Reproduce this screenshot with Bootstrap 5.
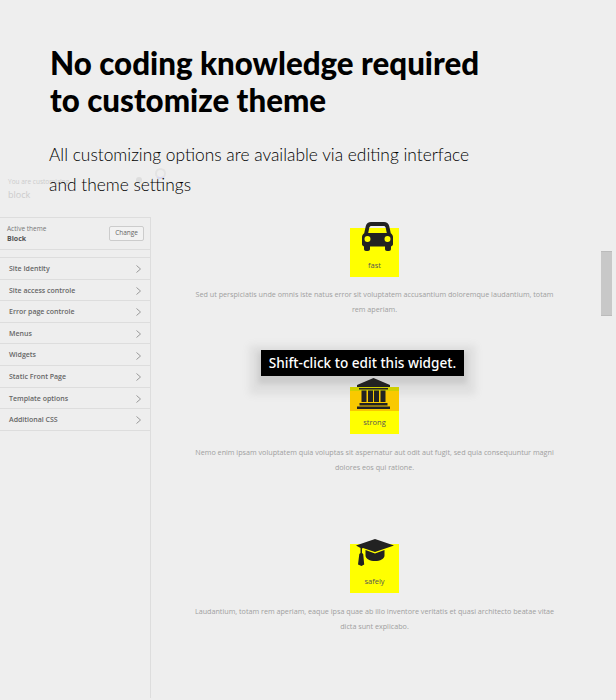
<!DOCTYPE html>
<html lang="en"><head><meta charset="utf-8"><title>Customize theme</title>
<link href="https://cdn.jsdelivr.net/npm/bootstrap@5.3.0/dist/css/bootstrap.min.css" rel="stylesheet">
<style>
html,body{height:100%}
body{background:#eee;overflow:hidden;font-family:"Open Sans","Noto Sans",sans-serif;color:#555}
.stage{position:relative;width:616px;height:700px;background:#eee}
.hero{position:absolute;left:49px;top:45px;z-index:5;color:#000;font-family:"Lato",sans-serif}
.hero-title{font-size:31.300px;font-weight:900;line-height:36.500px;margin:0 0 22px;padding-left:1px;color:#000}
.hero-sub{font-size:17.350px;line-height:30px;margin:0;font-weight:300;color:#000}
.side{width:151px;height:698px;flex:none;padding-top:172px;display:flex;flex-direction:column}
.side-head{height:45px;padding-left:8px;color:#ccc;line-height:1}
.side-head small{display:block;font-size:6.500px;margin-bottom:4px;margin-top:7px}
.side-head span{display:block;font-size:9px}
.side-body{flex:1;border-right:1px solid #ddd}
.theme-box{height:33px;border-top:1px solid #ddd;border-bottom:1px solid #ddd;padding:0 6px 0 7px}
.theme-box small{display:block;font-size:6.500px;color:#777;line-height:9px}
.theme-box b{display:block;font-size:7px;color:#555;line-height:11px}
.chg{font-size:6.500px;line-height:1;padding:3.500px 5px;color:#666;border:1px solid #ccc;background:#f2f2f2;border-radius:2px}
.menu{margin-top:7px;border-top:1px solid #ddd;--bs-list-group-bg:transparent;border-radius:0}
.menu .list-group-item{height:21.600px;padding:2px 9px 0;background:transparent;border:0;border-bottom:1px solid #ddd;font-size:7px;font-weight:600;color:#666;border-radius:0}
.menu svg{width:5px;height:8px}
.preview{flex:1;padding-top:228px;padding-right:18px;position:relative}
.wid{height:158px;display:flex;flex-direction:column;align-items:center}
.sq{width:49px;height:49px;background:#ff0;position:relative;z-index:3;display:flex;align-items:flex-end;justify-content:center;font-size:7.500px;color:#555;padding-bottom:8px;line-height:1}
.sq svg{position:absolute;fill:#222}
.sq-orange{margin-top:1px;height:47px;background:linear-gradient(#cfcf00 0 4px,#f9c900 4px 24px,#ff0 24px)}
.txt{margin:11px 0 0;text-align:center;font-size:7.200px;line-height:15px;color:#a0a0a0;white-space:nowrap}
.wid:first-child .txt{margin-top:10px}
.thumb{position:absolute;left:450px;top:251px;width:11px;height:65px;background:#c8c8c8;border-top:1px solid #bbb;border-bottom:1px solid #bbb}
.tip{position:absolute;left:110px;top:350px;width:203px;height:26px;background:#000;color:#fff;font-size:13.600px;font-weight:500;line-height:26px;text-align:center;white-space:nowrap;box-shadow:0 5px 5px 3px #ccc,0 7px 7px 12px #e0e0e0;z-index:2;font-family:"Noto Sans",sans-serif}
.spin{position:absolute;left:155px;top:168px;width:11px;height:11px;border:2px solid #e3e3e3;border-bottom-color:#d8d8f0;border-radius:50%}
.dot{position:absolute;left:136px;top:177px;width:6px;height:6px;border-radius:50%;background:#ddd}
</style></head><body>
<div class="stage d-flex">
  <div class="hero">
    <h1 class="hero-title">No coding knowledge required<br>to customize theme</h1>
    <p class="hero-sub">All customizing options are available via editing interface<br>and theme settings</p>
  </div>
  <span class="spin"></span><span class="dot"></span>
  <aside class="side">
    <div class="side-head"><small>You are customizing</small><span>block</span></div>
    <div class="side-body">
    <div class="theme-box d-flex justify-content-between align-items-center">
      <div><small>Active theme</small><b>Block</b></div>
      <button class="btn chg" type="button">Change</button>
    </div>
    <div class="list-group menu">
      <div class="list-group-item d-flex justify-content-between align-items-center">Site Identity<svg viewBox="0 0 5 8"><path d="M.5.5 4.500 4 .5 7.500" fill="none" stroke="#999"/></svg></div>
      <div class="list-group-item d-flex justify-content-between align-items-center">Site access controle<svg viewBox="0 0 5 8"><path d="M.5.5 4.500 4 .5 7.500" fill="none" stroke="#999"/></svg></div>
      <div class="list-group-item d-flex justify-content-between align-items-center">Error page controle<svg viewBox="0 0 5 8"><path d="M.5.5 4.500 4 .5 7.500" fill="none" stroke="#999"/></svg></div>
      <div class="list-group-item d-flex justify-content-between align-items-center">Menus<svg viewBox="0 0 5 8"><path d="M.5.5 4.500 4 .5 7.500" fill="none" stroke="#999"/></svg></div>
      <div class="list-group-item d-flex justify-content-between align-items-center">Widgets<svg viewBox="0 0 5 8"><path d="M.5.5 4.500 4 .5 7.500" fill="none" stroke="#999"/></svg></div>
      <div class="list-group-item d-flex justify-content-between align-items-center">Static Front Page<svg viewBox="0 0 5 8"><path d="M.5.5 4.500 4 .5 7.500" fill="none" stroke="#999"/></svg></div>
      <div class="list-group-item d-flex justify-content-between align-items-center">Template options<svg viewBox="0 0 5 8"><path d="M.5.5 4.500 4 .5 7.500" fill="none" stroke="#999"/></svg></div>
      <div class="list-group-item d-flex justify-content-between align-items-center">Additional CSS<svg viewBox="0 0 5 8"><path d="M.5.5 4.500 4 .5 7.500" fill="none" stroke="#999"/></svg></div>
    </div>
    </div>
  </aside>
  <main class="preview">
    <div class="wid">
      <div class="sq">fast
        <svg style="left:12px;top:-6px;width:31px;height:29px" viewBox="0 0 31 29"><path fill-rule="evenodd" d="M9 0h13c2.600 0 4.500 1.500 5.200 4l1.600 7.200C30.200 12 31 13.600 31 15v7c0 1.300-.8 2.200-2 2.400V27c0 1.200-.8 2-2 2h-2c-1.200 0-2-.8-2-2v-2.500H8V27c0 1.200-.8 2-2 2H4c-1.200 0-2-.8-2-2v-2.600C.8 24.200 0 23.300 0 22v-7c0-1.400.8-3 2.200-3.800L3.800 4C4.500 1.500 6.400 0 9 0Zm.5 4C8.300 4 7.600 4.600 7.300 5.700L6.200 11h18.600l-1.100-5.300C23.400 4.600 22.700 4 21.500 4ZM5.500 14a3 3 0 1 0 0 6 3 3 0 0 0 0-6Zm20 0a3 3 0 1 0 0 6 3 3 0 0 0 0-6Z"/></svg>
      </div>
      <p class="txt">Sed ut perspiciatis unde omnis iste natus error sit voluptatem accusantium doloremque laudantium, totam<br>rem aperiam.</p>
    </div>
    <div class="wid">
      <div class="sq sq-orange">strong
        <svg style="left:7px;top:-9px;width:33px;height:31px" viewBox="0 0 33 31"><path d="M16.500 0 33 7v2H0V7ZM2 10h29v1.500H2ZM4.500 12.500h5V24h-5Zm6.500 0h5V24h-5Zm6 0h5V24h-5Zm6.500 0h5V24h-5ZM2.500 25h28v2.500h-28ZM0 28.500h33V31H0Z"/></svg>
      </div>
      <p class="txt">Nemo enim ipsam voluptatem quia voluptas sit aspernatur aut odit aut fugit, sed quia consequuntur magni<br>dolores eos qui ratione.</p>
    </div>
    <div class="wid">
      <div class="sq">safely
        <svg style="left:6px;top:-5px;width:38px;height:27px" viewBox="0 0 38 27"><path d="M19 0 38 6.500 19 13 7 8.900 6 9.500V14l1.200 1 1 10.500-2.700 1.500L2 25.500 3.300 15l1.200-1V9L0 6.500ZM9.500 11 19 14.500 28.500 11v5.500C28.500 20 24 22 19 22s-9.500-2-9.500-5.500Z"/></svg>
      </div>
      <p class="txt">Laudantium, totam rem aperiam, eaque ipsa quae ab illo inventore veritatis et quasi architecto beatae vitae<br>dicta sunt explicabo.</p>
    </div>
    <div class="thumb"></div>
    <div class="tip">Shift-click to edit this widget.</div>
  </main>
</div>
<script src="https://cdn.jsdelivr.net/npm/bootstrap@5.3.0/dist/js/bootstrap.bundle.min.js"></script>
</body></html>
